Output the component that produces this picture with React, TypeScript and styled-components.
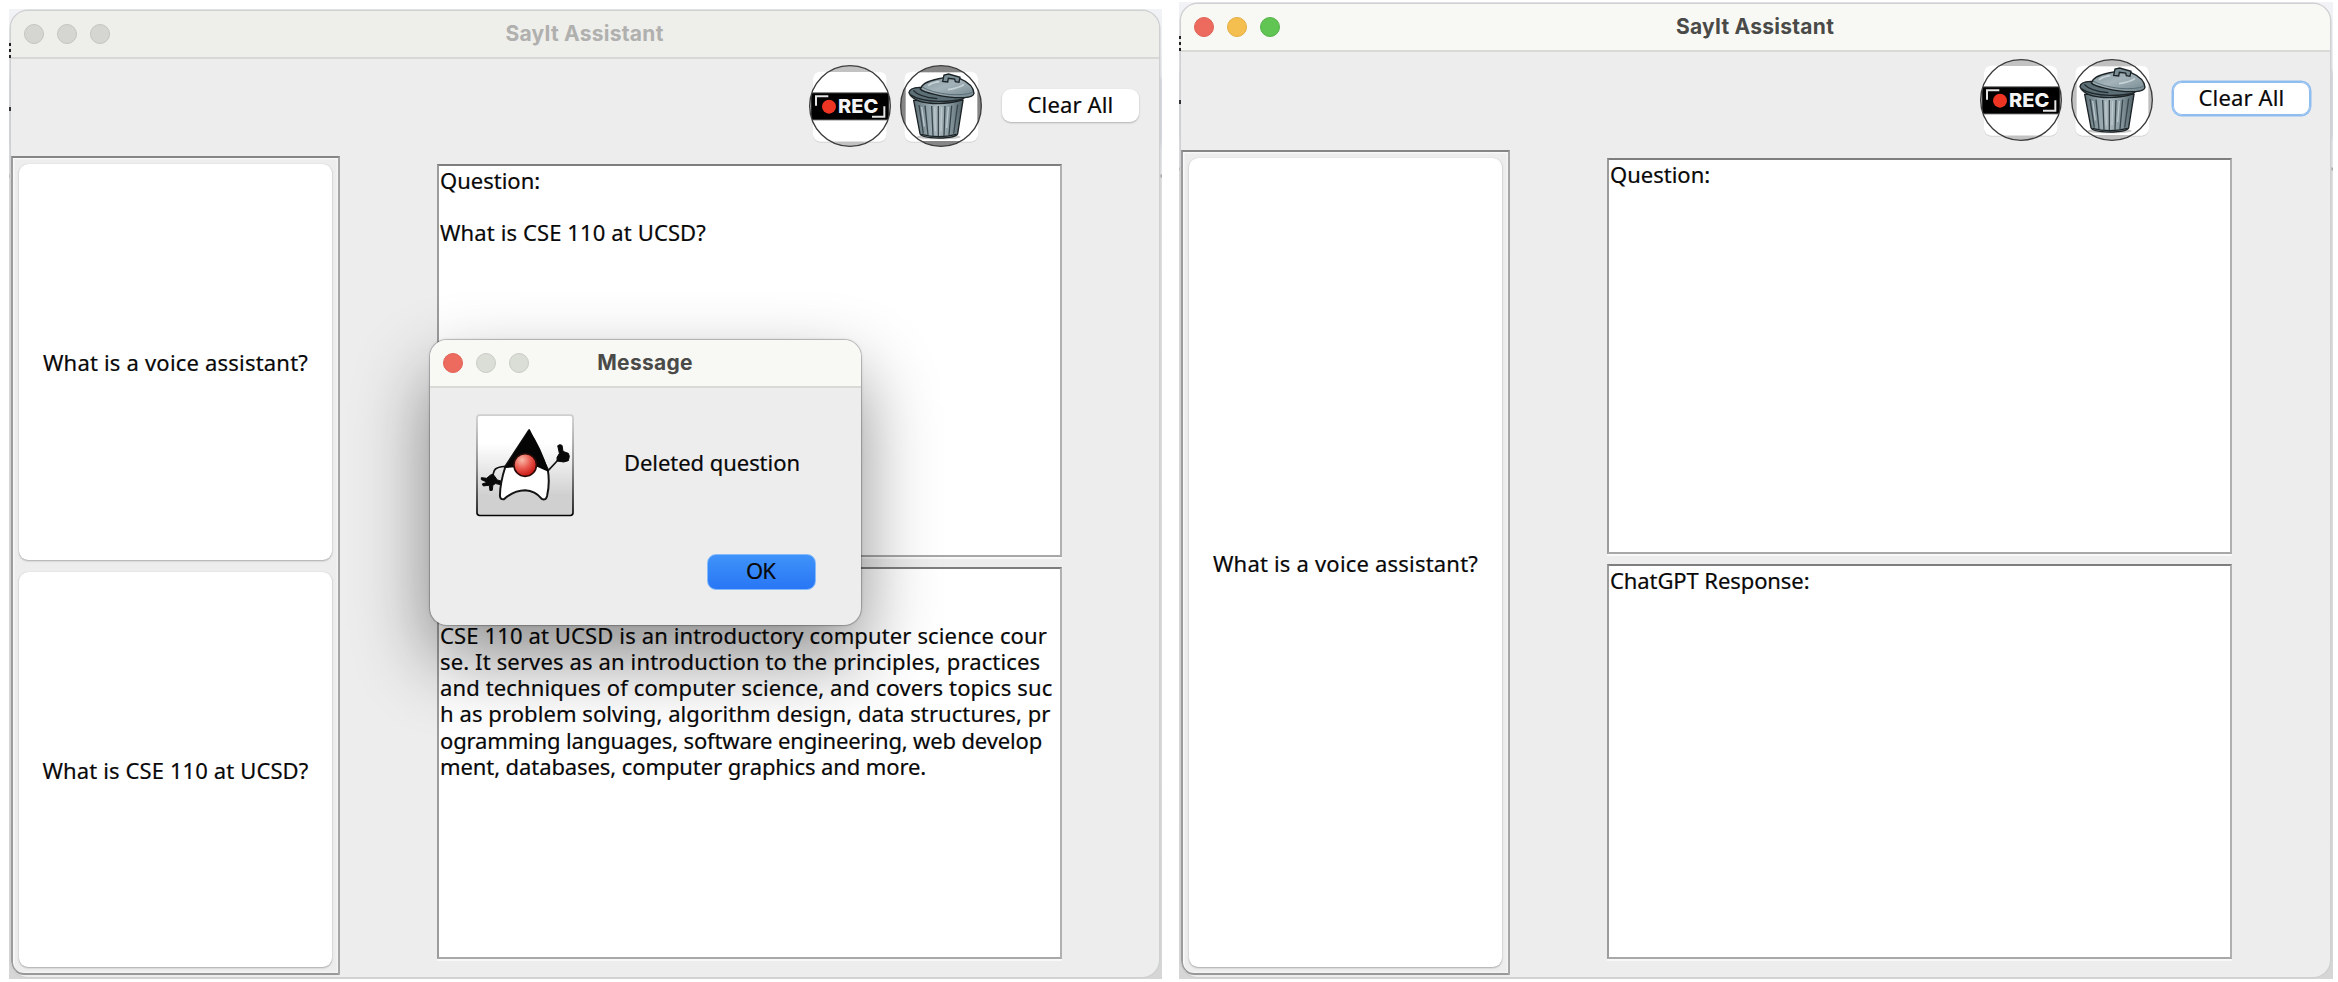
import React from 'react';
import styled, { createGlobalStyle, css } from 'styled-components';

const GlobalStyle = createGlobalStyle`
  *, *::before, *::after { box-sizing: border-box; }
  html, body { margin: 0; padding: 0; background: #fff; }
  body { overflow: hidden; }
  button { font: inherit; color: inherit; margin: 0; }
`;

const Desktop = styled.main`
  position: relative;
  width: 2338px;
  height: 982px;
  background: #ffffff;
  font-family: 'Noto Sans', 'Open Sans', sans-serif;
  font-size: 22px;
  line-height: 26.2px;
  color: #080808;
  -webkit-text-stroke: 0.2px currentColor;
  overflow: hidden;
`;

/* The strip of desktop that shows around each window. */
const Backdrop = styled.section<{ $x: number; $y: number; $height: number; $width: number }>`
  position: absolute;
  left: ${(p) => p.$x}px;
  top: ${(p) => p.$y}px;
  width: ${(p) => p.$width}px;
  height: ${(p) => p.$height}px;
  padding: 2px 3px 2px 2px;
  display: flex;
  background: linear-gradient(
    #f1f3f6 0, #e8eaee 66px, #d3d7e0 72px, #d0d5de 132px, #e0e2e6 140px,
    #e2e3e5 165px, #a9a9a9 166px, #a9a9a9 168px, #dedede 169px, #d6d6d6 100%
  );

  &::before {
    content: '';
    position: absolute;
    left: 0;
    top: 34px;
    width: 2px;
    height: 15px;
    background: repeating-linear-gradient(#222 0 3px, #e6e6e6 3px 6px);
  }
  &::after {
    content: '';
    position: absolute;
    left: 0;
    top: 98px;
    width: 2px;
    height: 4px;
    background: #333;
  }
`;

const AppWindow = styled.article`
  flex: 1;
  min-width: 0;
  display: flex;
  flex-direction: column;
  background: #ededed;
  border-radius: 17px;
  overflow: hidden;
  box-shadow: 0 0 0 1.5px #cfd0d2;
`;

const TitleBar = styled.header<{ $active: boolean }>`
  flex: none;
  position: relative;
  height: 48px;
  display: flex;
  align-items: center;
  justify-content: center;
  background: ${(p) => (p.$active ? '#f8f9f4' : '#eeeeeb')};
  border-bottom: 2px solid ${(p) => (p.$active ? '#d9d9d7' : '#d8d8d6')};
`;

const TrafficLights = styled.div`
  position: absolute;
  left: 13px;
  top: 0;
  bottom: 0;
  display: flex;
  align-items: center;
  gap: 13px;
`;

const Light = styled.span<{ $color: string; $edge: string }>`
  width: 20px;
  height: 20px;
  border-radius: 50%;
  background: ${(p) => p.$color};
  border: 1px solid ${(p) => p.$edge};
`;

const Title = styled.h1<{ $active: boolean }>`
  margin: 0;
  padding-right: 1px;
  font: 700 21px/24px Inter, sans-serif;
  letter-spacing: 0.26px;
  -webkit-text-stroke: 0;
  color: ${(p) => (p.$active ? '#4a4a48' : '#b0b0ae')};
`;

const Toolbar = styled.div<{ $height: number }>`
  flex: none;
  height: ${(p) => p.$height}px;
  display: flex;
  align-items: center;
  justify-content: flex-end;
  padding: 0 20px 3px 0;
`;

const IconButton = styled.button`
  width: 82px;
  height: 82px;
  margin-right: 9px;
  padding: 0;
  border: 0;
  background: none;

  svg { display: block; overflow: visible; }
`;

const ClearButton = styled.button<{ $focused: boolean }>`
  width: 137px;
  height: 33px;
  margin-left: 11px;
  padding: 0 0 3px;
  border: 0;
  border-radius: 9px;
  background: #fff;
  letter-spacing: 0.15px;
  line-height: 30px;
  position: relative;
  top: -1px;
  box-shadow: 0 1px 2px rgba(0, 0, 0, 0.25);
  ${(p) =>
    p.$focused &&
    css`
      box-shadow: inset 0 0 0 1px #90bdf0, 0 0 0 1.5px #90bdf0;
    `}
`;

const Workspace = styled.div`
  flex: 1;
  min-height: 0;
  display: flex;
  padding-bottom: 2px;
`;

const Sidebar = styled.nav`
  width: 329px;
  display: flex;
  flex-direction: column;
  gap: 12px;
  padding: 6px 6px 6px;
  border: 2px solid;
  border-color: #868686 #a6a6a6 #999 #9c9c9c;
  border-bottom-left-radius: 13px;
  box-shadow: inset 1.5px 1.5px 0 #f8f8f8, inset -1.5px -1.5px 0 #f4f4f4;
`;

const QuestionButton = styled.button`
  flex: 1;
  padding: 1px 0 0;
  border: 0;
  border-radius: 9px;
  background: #fff;
  box-shadow: 0 1px 2px rgba(0, 0, 0, 0.28), 0 0 1px rgba(0, 0, 0, 0.15);
`;

const Panes = styled.div`
  width: 625px;
  margin-left: 97px;
  display: flex;
  flex-direction: column;
  gap: 10px;
  padding: 8px 0 16px;
`;

const TextPane = styled.div`
  flex: 1;
  padding: 1px 0 0 1px;
  background: #fff;
  border: 2px solid;
  border-color: #7e7e7e #b0b0b0 #a8a8a8 #9c9c9c;
  box-shadow: 0 2px 0 #f8f8f8;
  white-space: pre;
`;

const Line = styled.div<{ $track: number }>`
  height: 26.2px;
  letter-spacing: ${(p) => p.$track}px;
`;

const Tracked = styled.span<{ $track: number }>`
  letter-spacing: ${(p) => p.$track}px;
`;

const Dialog = styled.div`
  position: absolute;
  left: 430px;
  top: 340px;
  width: 431px;
  height: 284.5px;
  display: flex;
  flex-direction: column;
  border-radius: 17px;
  background: #ededed;
  overflow: hidden;
  box-shadow: 0 0 0 1px rgba(0, 0, 0, 0.16), 0 0 3px rgba(0, 0, 0, 0.25), 0 34px 76px rgba(0, 0, 0, 0.45);
`;

const DialogBody = styled.div`
  flex: 1;
  display: flex;
  flex-direction: column;
  justify-content: space-between;
  padding: 26px 45px 35px 46px;
`;

const MessageRow = styled.div`
  display: flex;
  align-items: center;
  gap: 50px;

  p { margin: 0 0 6px; letter-spacing: -0.05px; }
`;

const OkButton = styled.button`
  align-self: flex-end;
  width: 109px;
  height: 36px;
  padding: 0 2px 4px 0;
  border: 1.5px solid #86bbfa;
  border-radius: 9px;
  background: linear-gradient(#3f93f9, #2876f5);
  letter-spacing: -0.8px;
  line-height: 28px;
`;

function RecordIcon() {
  return (
    <svg width="82" height="82" viewBox="15 16 246 246">
      <defs>
        <clipPath id="recClip"><circle cx="138" cy="139" r="121" /></clipPath>
      </defs>
      <rect x="27" y="38" width="221" height="211" rx="22" fill="#d4d4d4" />
      <rect x="27" y="36" width="221" height="210" rx="22" fill="#fff" />
      <g clipPath="url(#recClip)">
        <rect x="15" y="15" width="246" height="22" fill="#c2c2c2" />
        <rect x="15" y="245" width="246" height="20" fill="#c2c2c2" />
        <rect x="15" y="37" width="246" height="208" fill="#fff" />
        <rect x="15" y="90" width="9" height="100" fill="#c8c8c8" />
        <rect x="253" y="90" width="8" height="100" fill="#c8c8c8" />
        <rect x="22" y="98" width="232" height="84" fill="#555" />
        <rect x="22" y="101" width="232" height="78" fill="#000" />
      </g>
      <path d="M36 138V110H73M241 140V171H204" fill="none" stroke="#e4e4e4" strokeWidth="6" />
      <circle cx="75" cy="141" r="21" fill="#ee3524" />
      <text x="102" y="161" fontFamily="Inter, sans-serif" fontWeight="800" fontSize="57" textLength="121" lengthAdjust="spacingAndGlyphs" fill="#f4f4f4">REC</text>
      <circle cx="138" cy="139" r="121" fill="none" stroke="#3c3c3c" strokeWidth="4" />
    </svg>
  );
}

function TrashIcon({ capColor }: { capColor: string }) {
  return (
    <svg width="82" height="82" viewBox="286 16 246 246">
      <defs>
        <clipPath id="trashClip"><circle cx="409" cy="139" r="121" /></clipPath>
        <linearGradient id="canBody" x1="0" x2="1">
          <stop offset="0" stopColor="#5d6e74" />
          <stop offset=".3" stopColor="#93a4aa" />
          <stop offset=".5" stopColor="#a9b8bd" />
          <stop offset=".75" stopColor="#84969c" />
          <stop offset="1" stopColor="#4f6067" />
        </linearGradient>
        <linearGradient id="canLid" x1="0" y1="0" x2="1" y2="1">
          <stop offset="0" stopColor="#7e9198" />
          <stop offset=".45" stopColor="#a3b3b9" />
          <stop offset="1" stopColor="#74878f" />
        </linearGradient>
      </defs>
      <rect x="299" y="38" width="221" height="211" rx="22" fill="#d4d4d4" />
      <rect x="299" y="36" width="221" height="210" rx="22" fill="#fff" />
      <g clipPath="url(#trashClip)">
        <rect x="286" y="15" width="246" height="250" fill={capColor} />
        <rect x="303" y="38" width="215" height="206" fill="#fff" />
      </g>
      <ellipse cx="402" cy="232" rx="66" ry="7" fill="#c9c9c9" />
      <path d="M327 122L346 222Q349 234 402 235Q455 234 459 222L475 122Z" fill="url(#canBody)" stroke="#1c2326" strokeWidth="4" />
      <g fill="none" stroke="#39474c" strokeWidth="4">
        <path d="M343 136L356 222M361 138L370 226M381 139L385 228M401 139V229M421 139L418 228M441 138L433 226M459 135L447 222" />
      </g>
      <g fill="none" stroke="#bcc9cd" strokeWidth="4">
        <path d="M351 142L359 200M390 143L392 215M411 143L409 215M431 142L426 205" />
      </g>
      <path d="M350 224Q402 238 455 224" fill="none" stroke="#1c2326" strokeWidth="4" />
      <path d="M313 99Q314 84 345 83L480 112Q474 128 402 132Q326 131 313 99Z" fill="#5c6f76" stroke="#1c2326" strokeWidth="4" />
      <path d="M316 105Q345 124 402 125Q450 125 475 118M326 92Q343 112 398 117" fill="none" stroke="#20282b" strokeWidth="4" />
      <path d="M347 88Q352 68 398 58Q430 50 466 57Q506 74 508 101Q506 112 480 114Q430 115 390 104Q353 96 347 88Z" fill="url(#canLid)" stroke="#1c2326" strokeWidth="4" />
      <path d="M352 82Q380 98 430 104Q480 108 504 98" fill="none" stroke="#5d6f76" strokeWidth="3" />
      <path d="M370 78Q384 68 404 66M430 90Q466 84 478 74" fill="none" stroke="#c6d2d6" strokeWidth="5" />
      <path d="M414 65L418 46L432 43L466 53L463 68L452 66L450 58L431 56L429 67Z" fill="#7b8e95" stroke="#1c2326" strokeWidth="4" />
      <circle cx="409" cy="139" r="121" fill="none" stroke="#3c3c3c" strokeWidth="4" />
    </svg>
  );
}

function DukeIcon() {
  return (
    <svg width="98" height="103" viewBox="18 20 295 309">
      <defs>
        <linearGradient id="dukeBg" x1="0" y1="0" x2="0" y2="1">
          <stop offset=".28" stopColor="#ffffff" />
          <stop offset=".8" stopColor="#d0d0d0" />
        </linearGradient>
        <linearGradient id="dukeEdge" x1="0" y1="0" x2="0" y2="1">
          <stop offset="0" stopColor="#cfcfcf" />
          <stop offset=".5" stopColor="#7c7c7c" />
          <stop offset="1" stopColor="#050505" />
        </linearGradient>
        <radialGradient id="dukeNose" cx=".36" cy=".28" r=".75">
          <stop offset="0" stopColor="#f9b9a8" />
          <stop offset=".5" stopColor="#ea5a50" />
          <stop offset="1" stopColor="#c8120f" />
        </radialGradient>
      </defs>
      <rect x="21" y="23" width="289" height="302" rx="8" fill="url(#dukeBg)" stroke="url(#dukeEdge)" strokeWidth="5" />
      <path d="M108 177Q78 178 73 190Q68 202 68 212" fill="none" stroke="#111" strokeWidth="5" />
      <path d="M34 211L50 213L62 203Q70 197 75 208L82 218L95 222L91 232L77 229L69 233L67 249L60 250L58 234L40 236L37 230L52 225L34 217Z" fill="#080808" stroke="#080808" strokeWidth="3" strokeLinejoin="round" />
      <path d="M233 192L265 158" fill="none" stroke="#111" strokeWidth="5" />
      <path d="M264 115Q270 109 277 114L280 132L296 138L299 147L296 160L282 164L262 161L262 150L269 138Z" fill="#080808" stroke="#080808" strokeWidth="3" strokeLinejoin="round" />
      <path d="M178 68L107 176Q90 228 90 266Q91 278 102 276Q130 250 166 249Q196 250 216 275Q228 281 232 266Q241 226 234 186Z" fill="#fff" stroke="#141414" strokeWidth="6" strokeLinejoin="round" />
      <path d="M178 68L104 182L135 180Q165 192 202 178L237 194Q214 118 178 68Z" fill="#050505" />
      <circle cx="166" cy="173" r="34" fill="url(#dukeNose)" stroke="#2a0d0b" strokeWidth="5" />
    </svg>
  );
}

type LightColors = [string, string][];
const GREY: [string, string] = ['#d5d5d2', '#c3c3c0'];
const PALE: [string, string] = ['#dbddd7', '#c9cbc5'];
const RED: [string, string] = ['#ed6a5e', '#df6156'];
const YELLOW: [string, string] = ['#f5bf4f', '#e2ad43'];
const GREEN: [string, string] = ['#61c554', '#57b14a'];

function TitleStrip({ title, active, lights }: { title: string; active: boolean; lights: LightColors }) {
  return (
    <TitleBar $active={active}>
      <TrafficLights>
        {lights.map(([color, edge], i) => (
          <Light key={i} $color={color} $edge={edge} />
        ))}
      </TrafficLights>
      <Title $active={active}>{title}</Title>
    </TitleBar>
  );
}

type TextLine = [string, number];

interface AssistantProps {
  active: boolean;
  toolbarHeight: number;
  lights: LightColors;
  questions: TextLine[];
  question: TextLine[];
  response: TextLine[];
}

function AssistantWindow({ active, toolbarHeight, lights, questions, question, response }: AssistantProps) {
  return (
    <AppWindow>
      <TitleStrip title="SayIt Assistant" active={active} lights={lights} />
      <Toolbar $height={toolbarHeight}>
        <IconButton aria-label="Record"><RecordIcon /></IconButton>
        <IconButton aria-label="Delete"><TrashIcon capColor={active ? '#c0c0c0' : '#868686'} /></IconButton>
        <ClearButton $focused={active}>Clear All</ClearButton>
      </Toolbar>
      <Workspace>
        <Sidebar>
          {questions.map(([text, track]) => (
            <QuestionButton key={text}><Tracked $track={track}>{text}</Tracked></QuestionButton>
          ))}
        </Sidebar>
        <Panes>
          {[question, response].map((lines, i) => (
            <TextPane key={i}>
              {lines.map(([text, track], j) => (
                <Line key={j} $track={track}>{text}</Line>
              ))}
            </TextPane>
          ))}
        </Panes>
      </Workspace>
    </AppWindow>
  );
}

const VOICE: TextLine = ['What is a voice assistant?', 0.2];
const CSE: TextLine = ['What is CSE 110 at UCSD?', 0.12];

const RESPONSE: TextLine[] = [
  ['', 0],
  ['', 0],
  ['CSE 110 at UCSD is an introductory computer science cour', 0.13],
  ['se. It serves as an introduction to the principles, practices', 0.14],
  ['and techniques of computer science, and covers topics suc', 0.13],
  ['h as problem solving, algorithm design, data structures, pr', 0.08],
  ['ogramming languages, software engineering, web develop', -0.15],
  ['ment, databases, computer graphics and more.', -0.09],
];

export default function App() {
  return (
    <Desktop>
      <GlobalStyle />
      <Backdrop $x={9} $y={9} $width={1153} $height={970}>
        <AssistantWindow
          active={false}
          toolbarHeight={97}
          lights={[GREY, GREY, GREY]}
          questions={[VOICE, CSE]}
          question={[['Question:', 0], ['', 0], CSE]}
          response={RESPONSE}
        />
      </Backdrop>
      <Backdrop $x={1179} $y={2} $width={1154} $height={977}>
        <AssistantWindow
          active
          toolbarHeight={98}
          lights={[RED, YELLOW, GREEN]}
          questions={[VOICE]}
          question={[['Question:', 0]]}
          response={[['ChatGPT Response:', -0.09]]}
        />
      </Backdrop>
      <Dialog role="dialog">
        <TitleStrip title="Message" active lights={[RED, PALE, PALE]} />
        <DialogBody>
          <MessageRow>
            <DukeIcon />
            <p>Deleted question</p>
          </MessageRow>
          <OkButton>OK</OkButton>
        </DialogBody>
      </Dialog>
    </Desktop>
  );
}
